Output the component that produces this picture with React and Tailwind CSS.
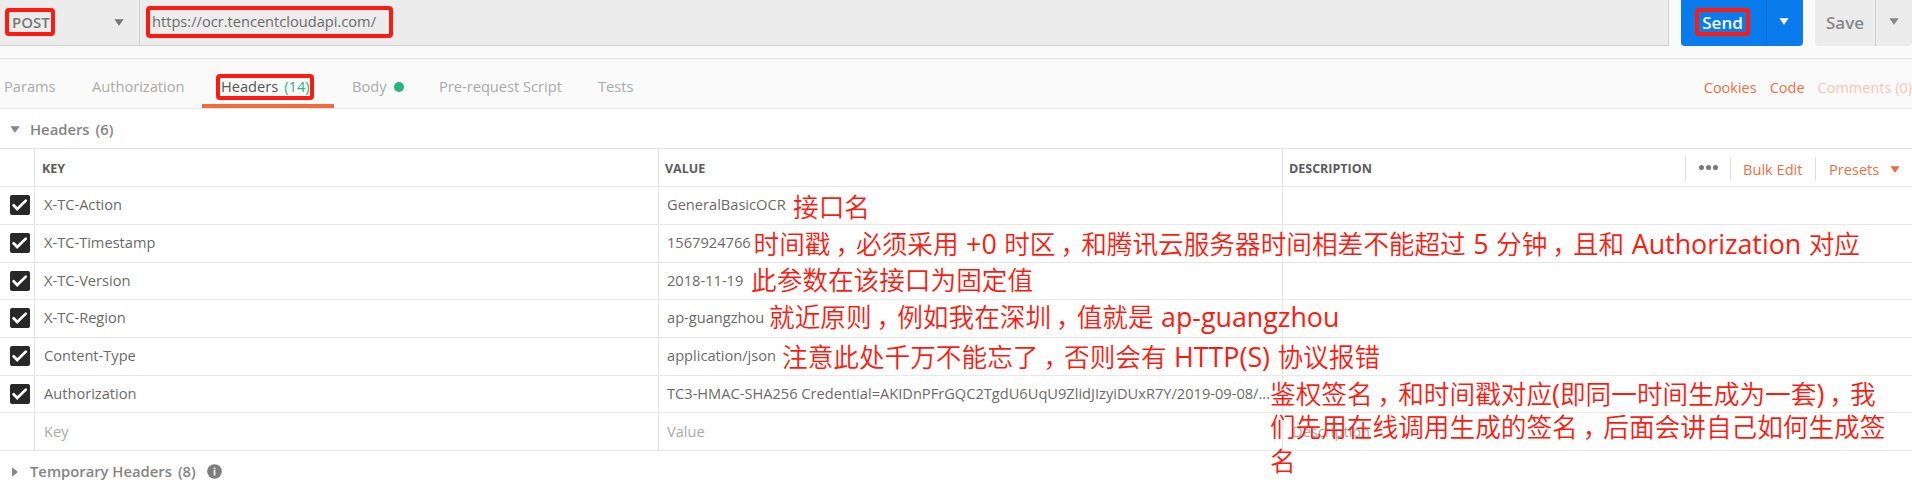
import React from "react";

const rows = [
  { key: "X-TC-Action", value: "GeneralBasicOCR", h: "h-[38px]" },
  { key: "X-TC-Timestamp", value: "1567924766", h: "h-[38px]" },
  { key: "X-TC-Version", value: "2018-11-19", h: "h-[37px]" },
  { key: "X-TC-Region", value: "ap-guangzhou", h: "h-[38px]" },
  { key: "Content-Type", value: "application/json", h: "h-[38px]" },
  {
    key: "Authorization",
    value: "TC3-HMAC-SHA256 Credential=AKIDnPFrGQC2TgdU6UqU9ZlidJIzyiDUxR7Y/2019-09-08/...",
    h: "h-[37px]",
  },
];

function Down({ className = "" }) {
  return (
    <svg viewBox="0 0 10 7" className={"h-[7px] w-[10px] shrink-0 fill-current " + className}>
      <path d="M0.3 0.3h9.4L5 6.8z" />
    </svg>
  );
}

function Mark({ className }) {
  return (
    <div className={"pointer-events-none absolute rounded-[4px] border-4 border-[#ff1a10] " + className} />
  );
}

function Check() {
  return (
    <svg viewBox="0 0 20 20" className="h-5 w-5">
      <rect width="20" height="20" rx="2" fill="#282828" />
      <path d="M3.6 10.2l3.6 3.8 8.6-8.4" fill="none" stroke="#fff" strokeWidth="2.7" strokeLinecap="round" />
    </svg>
  );
}

function Note({ className, lines }) {
  return (
    <div
      className={
        "pointer-events-none absolute font-['Open_Sans','Noto_Sans_CJK_SC',sans-serif] text-[25.65px] leading-[34px] font-[350] whitespace-nowrap text-[#ff1a10] " +
        className
      }
    >
      {lines.map((line) => (
        <div key={line} className="h-[34px]">
          {line.split(/(，|[ -~]+)/).map((part, i) => {
            if (part === "，")
              return (
                <span key={i} className="pr-[7.8px] pl-[5px] [font-feature-settings:'halt']">
                  ，
                </span>
              );
            if (/^[ -~]+$/.test(part))
              return (
                <span key={i} className="text-[26.8px] font-normal whitespace-pre [word-spacing:0.5px]">
                  {part}
                </span>
              );
            return part;
          })}
        </div>
      ))}
    </div>
  );
}

export default function App() {
  return (
    <div
      lang="zh-CN"
      className="relative flex h-[489px] w-[1912px] flex-col overflow-hidden bg-white font-['Open_Sans',sans-serif] text-[14.63px] text-[#6b6b6b]"
    >
      <div className="flex h-[59px] items-start border-b border-[#e6e6e6] bg-[#fafafa]">
        <div className="flex h-[46px] w-[1669px] border-r border-b border-[#d2d2d2] bg-[#ececec]">
          <div className="flex w-[140px] items-center justify-between border-r border-[#d2d2d2] pr-[15px] pb-px pl-3 text-[15px] font-semibold text-[#777]">
            <span>POST</span>
            <Down />
          </div>
          <div className="flex items-center pb-[2px] pl-3">https://ocr.tencentcloudapi.com/</div>
        </div>
        <div className="ml-3 flex h-[46px] w-[122px] rounded-b-[4px] bg-[#097bed] text-white">
          <div className="flex w-[86px] items-center justify-center border-r border-[#086fd6] pr-[2px] pb-px text-[17px] font-semibold">
            Send
          </div>
          <div className="flex flex-1 items-center justify-center pr-[3px] pb-[3px]">
            <Down />
          </div>
        </div>
        <div className="ml-3 flex h-[46px] w-[97px] rounded-b-[4px] bg-[#ececec] text-[#888]">
          <div className="flex w-[61px] items-center justify-center border-r border-[#d2d2d2] pb-px text-[17px] font-semibold">
            Save
          </div>
          <div className="flex flex-1 items-center justify-center pb-[3px]">
            <Down />
          </div>
        </div>
      </div>

      <div className="flex h-[50px] items-stretch border-b border-[#e6e6e6] bg-[#fafafa] text-[#aaa]">
        <div className="flex w-[92px] items-center pt-[6px] pl-1">Params</div>
        <div className="flex w-[110px] items-center pt-[6px]">Authorization</div>
        <div className="flex w-[132px] items-center border-b-4 border-[#f26b3a] pt-[10px] pl-[19px] text-[#555]">
          Headers <span className="ml-[6px] text-[#2bb583]">(14)</span>
        </div>
        <div className="flex w-[105px] items-center pt-[6px] pl-[18px]">
          Body <span className="ml-[7px] h-[10px] w-[10px] rounded-full bg-[#26b47f]" />
        </div>
        <div className="flex w-[159px] items-center pt-[6px]">Pre-request Script</div>
        <div className="flex items-center pt-[6px]">Tests</div>
        <div className="ml-auto flex items-center gap-[13px] pt-[9px] text-[14.5px] text-[#f2703f]">
          <span>Cookies</span>
          <span>Code</span>
          <span className="text-[#fac6b2]">Comments (0)</span>
        </div>
      </div>

      <div className="flex h-10 items-center border-b border-[#e6e6e6] pt-[2px] pl-[10px] text-[14.8px] font-semibold text-[#858585]">
        <Down />
        <span className="ml-[10px]">Headers</span>
        <span className="ml-[6px]">(6)</span>
      </div>

      <div className="flex h-[38px] border-b border-[#e6e6e6] text-[12.5px] font-bold text-[#5c5c5c]">
        <div className="w-[35px] border-r border-[#e6e6e6]" />
        <div className="flex w-[624px] items-center border-r border-[#e6e6e6] pt-[3px] pl-[7px]">KEY</div>
        <div className="flex w-[624px] items-center border-r border-[#e6e6e6] pt-[3px] pl-[6px]">VALUE</div>
        <div className="flex flex-1 items-center pt-[3px] pl-[6px]">
          <span>DESCRIPTION</span>
          <div className="ml-auto flex items-center text-[14.6px] font-normal text-[#f2703f]">
            <div className="flex h-[26px] w-[45px] items-center justify-center gap-[2px] border-l border-[#e0e0e0] pb-[4px]">
              <i className="h-[5px] w-[5px] rounded-full bg-[#777]" />
              <i className="h-[5px] w-[5px] rounded-full bg-[#777]" />
              <i className="h-[5px] w-[5px] rounded-full bg-[#777]" />
            </div>
            <div className="flex h-[22px] w-[85px] items-center border-l border-[#e0e0e0] pt-px pl-3">Bulk Edit</div>
            <div className="flex h-6 w-[97px] items-center border-l border-[#e0e0e0] pt-[1px] pl-[13px]">
              Presets <Down className="ml-[11px] text-[#f26b3a]" />
            </div>
          </div>
        </div>
      </div>

      {rows.map((r) => (
        <div key={r.key} className={"flex shrink-0 border-b border-[#e8e8e8] " + r.h}>
          <div className="flex w-[35px] items-center border-r border-[#e6e6e6] pb-px pl-[10px]">
            <Check />
          </div>
          <div className="flex w-[624px] items-center border-r border-[#e6e6e6] pb-px pl-[9px]">{r.key}</div>
          <div className="flex w-[624px] items-center border-r border-[#e6e6e6] pb-px pl-2 whitespace-nowrap">
            {r.value}
          </div>
        </div>
      ))}
      <div className="flex h-[38px] shrink-0 border-b border-[#e8e8e8] text-[#aaa]">
        <div className="w-[35px] border-r border-[#e6e6e6]" />
        <div className="flex w-[624px] items-center border-r border-[#e6e6e6] pl-[9px]">Key</div>
        <div className="flex w-[624px] items-center border-r border-[#e6e6e6] pl-2">Value</div>
        <div className="flex items-center pl-[9px]">Description</div>
      </div>

      <div className="flex flex-1 items-center pt-[3px] pl-3 text-[14.8px] font-semibold text-[#858585]">
        <svg viewBox="0 0 6 10" className="h-[10px] w-[6px] fill-current">
          <path d="M0 0.3v9.4L6 5z" />
        </svg>
        <span className="ml-[12px]">Temporary Headers</span>
        <span className="ml-[6px]">(8)</span>
        <svg viewBox="0 0 15 15" className="ml-[11px] h-[15px] w-[15px]">
          <circle cx="7.5" cy="7.5" r="7.3" fill="#7d7d7d" />
          <path d="M6.6 3.6h1.9v1.6H6.6zM6.6 6h1.9v5.4H6.6z" fill="#e8e8e8" />
        </svg>
      </div>

      <Mark className="top-2 left-[5px] h-7 w-[50px]" />
      <Mark className="top-[6px] left-[146px] h-8 w-[247px]" />
      <Mark className="top-[74px] left-[216px] h-[26px] w-[98px]" />
      <Mark className="top-2 left-[1695px] h-7 w-[55px]" />

      <Note className="top-[191px] left-[793px]" lines={["接口名"]} />
      <Note
        className="top-[227px] left-[753.5px]"
        lines={["时间戳，必须采用 +0 时区，和腾讯云服务器时间相差不能超过 5 分钟，且和 Authorization 对应"]}
      />
      <Note className="top-[264px] left-[751px]" lines={["此参数在该接口为固定值"]} />
      <Note className="top-[300px] left-[769px]" lines={["就近原则，例如我在深圳，值就是 ap-guangzhou"]} />
      <Note className="top-[340px] left-[782px]" lines={["注意此处千万不能忘了，否则会有 HTTP(S) 协议报错"]} />
      <Note
        className="top-[377px] left-[1270px]"
        lines={[
          "鉴权签名，和时间戳对应(即同一时间生成为一套)，我",
          "们先用在线调用生成的签名，后面会讲自己如何生成签",
          "名",
        ]}
      />
    </div>
  );
}
